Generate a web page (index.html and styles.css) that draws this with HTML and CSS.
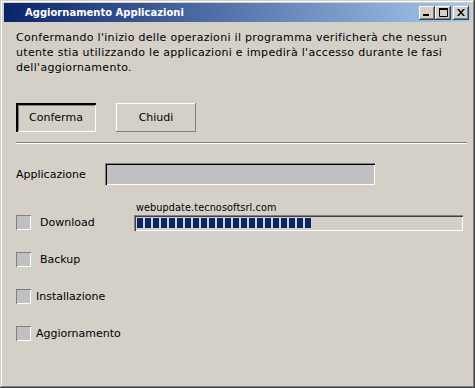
FILE: index.html
```html
<!DOCTYPE html>
<html lang="it">
<head>
    <meta charset="UTF-8">
    <title>Aggiornamento Applicazioni</title>
    <link rel="stylesheet" href="styles.css">
</head>
<body>
    <div class="window">
        <!-- TITLE BAR -->
        <div class="titlebar">
            <span class="title">Aggiornamento Applicazioni</span>
            <div class="title-buttons">
                <span class="tbtn">
                    <svg width="8" height="7" viewBox="0 0 8 7"><rect x="0" y="5" width="6" height="2" fill="#000"/></svg>
                </span>
                <span class="tbtn">
                    <svg width="9" height="9" viewBox="0 0 9 9"><path d="M0.5 1.5h8v7h-8z" fill="none" stroke="#000"/><rect x="0" y="0" width="9" height="2" fill="#000"/></svg>
                </span>
                <span class="tbtn close">
                    <svg width="8" height="7" viewBox="0 0 8 7"><path d="M0 0h2l2 2.5 2-2.5h2l-3 3.5 3 3.5h-2l-2-2.5-2 2.5h-2l3-3.5z" fill="#000"/></svg>
                </span>
            </div>
        </div>

        <!-- CONTENT -->
        <div class="content">
            <p class="intro">Confermando l'inizio delle operazioni il programma verificherà che nessun utente stia utilizzando le applicazioni e impedirà l'accesso durante le fasi dell'aggiornamento.</p>

            <div class="actions">
                <button class="btn btn-default">Conferma</button>
                <button class="btn">Chiudi</button>
            </div>

            <div class="separator"></div>

            <div class="app-row">
                <span class="app-label">Applicazione</span>
                <div class="field"></div>
            </div>

            <div class="steps">
                <div class="step step-download">
                    <span class="check"></span>
                    <span class="step-label">Download</span>
                    <div class="download">
                        <div class="host">webupdate.tecnosoftsrl.com</div>
                        <div class="progress">
                            <span class="blk"></span><span class="blk"></span><span class="blk"></span><span class="blk"></span>
                            <span class="blk"></span><span class="blk"></span><span class="blk"></span><span class="blk"></span>
                            <span class="blk"></span><span class="blk"></span><span class="blk"></span><span class="blk"></span>
                            <span class="blk"></span><span class="blk"></span><span class="blk"></span><span class="blk"></span>
                            <span class="blk"></span><span class="blk"></span><span class="blk"></span><span class="blk"></span>
                            <span class="blk"></span><span class="blk"></span>
                        </div>
                    </div>
                </div>
                <div class="step">
                    <span class="check"></span>
                    <span class="step-label">Backup</span>
                </div>
                <div class="step">
                    <span class="check"></span>
                    <span class="step-label tight">Installazione</span>
                </div>
                <div class="step">
                    <span class="check"></span>
                    <span class="step-label tight">Aggiornamento</span>
                </div>
            </div>
        </div>
    </div>
</body>
</html>
```

FILE: styles.css
```css
/* Classic Windows palette */
:root {
    --face: #d4d0c8;
    --shadow: #808080;
    --dark: #404040;
    --light: #ffffff;
    --field: #c0c0c0;
    --navy: #0a246a;
    --ui-font: "DejaVu Sans", Verdana, sans-serif;
}

body {
    margin: 0;
    font-family: var(--ui-font);
    font-size: 11px;
    color: #000;
}

/* Window frame */
.window {
    width: 475px;
    height: 388px;
    box-sizing: border-box;
    background-color: var(--face);
    padding: 3px 4px 4px;
    box-shadow:
        inset -1px -1px var(--dark),
        inset 1px 1px var(--face),
        inset -2px -2px var(--shadow),
        inset 2px 2px var(--light);
    display: flex;
    flex-direction: column;
}

.titlebar {
    height: 19px;
    display: flex;
    align-items: center;
    justify-content: space-between;
    background: linear-gradient(to right, var(--navy), #a6caf0);
    padding: 0 2px 0 21px;
}
.title {
    color: #fff;
    font-weight: bold;
    font-size: 10px;
}
.title-buttons {
    display: flex;
}
.tbtn {
    width: 16px;
    height: 14px;
    box-sizing: border-box;
    background-color: var(--face);
    display: flex;
    align-items: center;
    justify-content: center;
    box-shadow:
        inset -1px -1px var(--dark),
        inset 1px 1px var(--light),
        inset -2px -2px var(--shadow);
}
.tbtn.close {
    margin-left: 2px;
}

/* Content area */
.content {
    padding: 0 4px 0 12px;
}
.intro {
    margin: 8px 0 0;
    line-height: 15px;
    letter-spacing: 0.3px;
}

.actions {
    display: flex;
    gap: 20px;
    margin-top: 28px;
}
.btn {
    width: 80px;
    height: 29px;
    background-color: var(--face);
    border: none;
    font-family: var(--ui-font);
    font-size: 11px;
    color: #000;
    padding: 0;
    box-shadow:
        inset -1px -1px var(--shadow),
        inset 1px 1px var(--light);
}
.btn-default {
    box-shadow:
        inset 2px 2px #000,
        inset -1px -1px var(--light),
        inset 3px 3px var(--shadow);
}

.separator {
    margin-top: 10px;
    height: 1px;
    border-top: 1px solid var(--shadow);
    background-color: var(--light);
}

.app-row {
    display: flex;
    align-items: center;
    margin-top: 19px;
}
.app-label {
    width: 89px;
}
.field {
    width: 270px;
    height: 22px;
    box-sizing: border-box;
    background-color: var(--field);
    box-shadow:
        inset 1px 1px var(--shadow),
        inset 2px 2px #000,
        inset -1px -1px var(--light);
}

/* Steps list */
.steps {
    margin-top: 11px;
}
.step {
    display: flex;
    align-items: center;
    height: 37px;
}
.step-download {
    align-items: flex-end;
    height: 45px;
    padding-bottom: 10px;
    box-sizing: border-box;
}
.check {
    width: 15px;
    height: 15px;
    box-sizing: border-box;
    background-color: var(--field);
    box-shadow:
        inset 1px 1px var(--shadow),
        inset -1px -1px var(--light);
}
.step-download .check {
    margin-bottom: 1px;
}
.step-label {
    margin-left: 9px;
    width: 95px;
}
.step-label.tight {
    margin-left: 5px;
}
.step-download .step-label {
    line-height: 15px;
    margin-bottom: 1px;
}

.download {
    margin-left: -1px;
}
.host {
    font-size: 9.7px;
    letter-spacing: 0.1px;
    margin: 0 0 2px 2px;
}
.progress {
    width: 329px;
    height: 16px;
    box-sizing: border-box;
    padding: 3px 2px 2px 3px;
    display: flex;
    gap: 2px;
    box-shadow:
        inset 1px 1px var(--shadow),
        inset 2px 2px var(--dark),
        inset -1px -1px var(--light);
}
.blk {
    width: 6px;
    height: 10px;
    background-color: var(--navy);
}
```
